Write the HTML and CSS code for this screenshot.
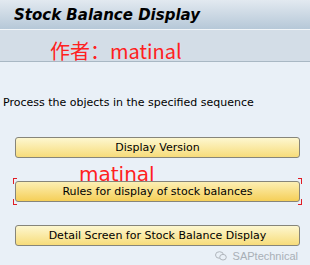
FILE: index.html
```html
<!DOCTYPE html>
<html>
<head>
<title>Stock Balance Display</title>
<link rel="stylesheet" href="styles.css">
</head>
<body>
<div class="screen">
  <div class="title-bar">
    <h1 class="title">Stock Balance Display</h1>
  </div>
  <div class="tool-bar">
    <span class="author">作者：matinal</span>
  </div>
  <div class="content">
    <p class="hint">Process the objects in the specified sequence</p>
    <div class="btn">Display Version</div>
    <div class="btn focused">
      Rules for display of stock balances
      <span class="mark">matinal</span>
      <span class="corner tl"></span>
      <span class="corner tr"></span>
      <span class="corner bl"></span>
      <span class="corner br"></span>
    </div>
    <div class="btn">Detail Screen for Stock Balance Display</div>
  </div>
  <div class="watermark">
    <svg width="12" height="10" viewBox="0 0 12 10">
      <ellipse cx="4.5" cy="4" rx="4" ry="3.3" fill="none" stroke="#b0b6bc" stroke-width="1"/>
      <ellipse cx="8" cy="6.2" rx="3.3" ry="2.8" fill="#e9f0f7" stroke="#b0b6bc" stroke-width="1"/>
    </svg>
    <span>SAPtechnical</span>
  </div>
</div>
</body>
</html>
```
FILE: styles.css
```css
body {
  margin: 0;
  background-color: #e9f0f7;
  font-family: "DejaVu Sans", Verdana, sans-serif;
}
.screen {
  position: relative;
  width: 310px;
  height: 265px;
  overflow: hidden;
}
.title-bar {
  height: 29px;
  background: linear-gradient(#e2e9f0, #b6c8d8);
  border-bottom: 1px solid #f2f6f9;
  display: flex;
  align-items: center;
}
.title {
  margin: 0 0 0 14px;
  font-size: 15px;
  font-weight: bold;
  font-style: italic;
  color: #000;
}
.tool-bar {
  box-sizing: border-box;
  height: 32px;
  padding: 11px 0 0 50px;
  background-color: #d3dde7;
  border-bottom: 1px solid #a9b8c4;
}
.author {
  display: block;
  font-family: "Noto Sans CJK SC", "DejaVu Sans", sans-serif;
  font-size: 20px;
  line-height: 20px;
  color: #ff2020;
}
.content {
  padding: 34px 10px 0 15px;
}
.hint {
  margin: 0 0 28px -12px;
  font-size: 11px;
  color: #000;
}
.btn {
  position: relative;
  height: 19px;
  margin-bottom: 23px;
  border: 1px solid #86857a;
  border-radius: 3px;
  background: linear-gradient(#fdf7d0, #f7dc7a);
  font-size: 11px;
  line-height: 19px;
  text-align: center;
  color: #000;
}
.focused {
  background: linear-gradient(#fcefb4, #f5cf58);
}
.mark {
  position: absolute;
  left: 63px;
  top: -15px;
  font-family: "DejaVu Sans", sans-serif;
  font-size: 20px;
  line-height: 14px;
  color: #ff2020;
}
.corner {
  position: absolute;
  width: 3px;
  height: 5px;
  border-color: #e01c24;
  border-style: solid;
  border-width: 0;
}
.tl { left: -3px; top: -4px; border-left-width: 1px; border-top-width: 1px; }
.tr { right: -3px; top: -4px; border-right-width: 1px; border-top-width: 1px; }
.bl { left: -3px; bottom: -4px; border-left-width: 1px; border-bottom-width: 1px; }
.br { right: -3px; bottom: -4px; border-right-width: 1px; border-bottom-width: 1px; }
.watermark {
  position: absolute;
  right: 12px;
  bottom: 3px;
  display: flex;
  align-items: center;
  gap: 6px;
  font-family: "Liberation Sans", sans-serif;
  font-size: 11px;
  color: #a8afb6;
}
```
